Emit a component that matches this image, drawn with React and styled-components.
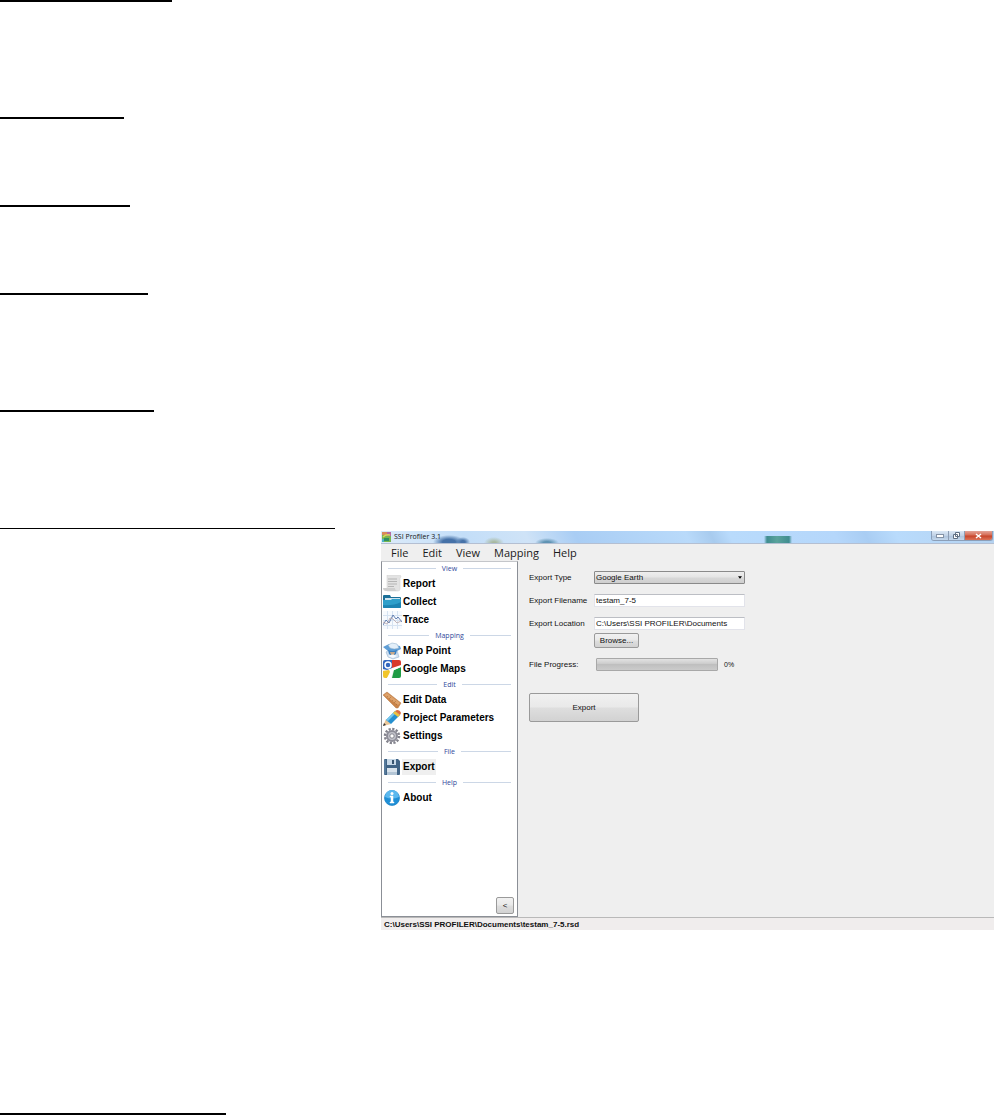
import styled, { createGlobalStyle } from "styled-components";

const GlobalStyle = createGlobalStyle`
  * {
    box-sizing: border-box;
  }

  body {
    margin: 0;
    background: #ffffff;
    color: #111111;
    font-family: "Liberation Sans", Arial, sans-serif;
    font-size: 8px;
  }
`

const Page = styled.main`
  display: flex;
  flex-direction: column;
`

const Rule = styled.hr`
  width: ${({ $width }) => $width}px;
  height: ${({ $thin }) => ($thin ? 1 : 2)}px;
  margin: 0 0 ${({ $space }) => $space || 0}px;
  border: none;
  background: #000000;
`

const Window = styled.section`
  display: flex;
  flex-direction: column;
  margin: 0 0 183px 381px;
  background: #efefef;
`

const TitleBar = styled.header`
  display: flex;
  align-items: center;
  gap: 3px;
  height: 13px;
  padding-left: 1px;
  border-bottom: 1px solid #b4bfd2;
  background:
    radial-gradient(ellipse 16px 7px at 68px 11px, #4672a8 40%, transparent),
    radial-gradient(ellipse 7px 5px at 82px 11px, #4672a8 30%, transparent),
    radial-gradient(ellipse 10px 6px at 113px 12px, #a9b9a0 20%, transparent),
    radial-gradient(ellipse 12px 5px at 166px 12px, #5f93b3 30%, transparent),
    linear-gradient(90deg, transparent, #3f8d90 3px, #5aa39c 13px, #3f8d90 25px, transparent) 383px 5px / 28px 8px no-repeat,
    linear-gradient(65deg, #dcebfa 0%, #c3def8 14%, #cfe3f7 24%, #a9cdf4 32%, #b9dafa 50%, #a8cbee 54%, #b9dbfc 57%, #b5d7fb 74%, #a9cdf3 79%, #b9dbfc 84%, #b4d2f0 100%);
`

const Title = styled.h1`
  flex: 1;
  margin: 0;
  font-family: "Open Sans", sans-serif;
  font-size: 7px;
  font-weight: 400;
  line-height: 12px;
`

const WindowButtons = styled.div`
  display: flex;
  align-self: flex-start;
  margin-right: 1px;
  border: 1px solid #8b9fb9;
  border-top: none;
  border-radius: 0 0 3px 3px;
  overflow: hidden;
`

const WindowButton = styled.button`
  display: flex;
  align-items: center;
  justify-content: center;
  width: ${({ $close }) => ($close ? 28 : 16)}px;
  height: 9px;
  padding: 0;
  border: none;
  border-left: ${({ $first }) => ($first ? "none" : "1px solid #8d9db3")};
  background: ${({ $close }) => ($close
    ? "linear-gradient(#e3a498, #d66d56 45%, #c7452b 55%, #dc7257)"
    : "linear-gradient(#dbe8f5, #c1d2e6 50%, #adc3dc 55%, #c5d8ec)")};
`

const MenuBar = styled.nav`
  display: flex;
  gap: 14px;
  height: 17px;
  padding-left: 10px;
`

const MenuLink = styled.a`
  color: #1a1a1a;
  font-family: "Open Sans", sans-serif;
  font-size: 11px;
  line-height: 18px;
  text-decoration: none;
`

const Body = styled.div`
  display: flex;
  min-height: 356px;
`

const Sidebar = styled.aside`
  display: flex;
  flex-direction: column;
  width: 137px;
  border: 1px solid #8b8f96;
  border-top-color: #c4c6ca;
  background: #ffffff;
`

const GroupTitle = styled.h2`
  display: flex;
  align-items: center;
  gap: 6px;
  margin: 0;
  padding: 0 6px;
  color: #31499a;
  font-family: "Open Sans", sans-serif;
  font-size: 7px;
  font-weight: 400;
  line-height: 13px;

  &:before,
  &:after {
    flex: 1;
    height: 1px;
    background: #ccd7e6;
    content: "";
  }
`

const SideItem = styled.button`
  display: flex;
  align-items: center;
  height: 18px;
  padding: 0 0 0 1px;
  border: none;
  background: none;
  color: #000000;
  font-family: inherit;
  font-size: 10px;
  font-weight: 700;
  line-height: 16px;

  svg {
    width: 19px;
    height: 18px;
    flex: none;
  }

  span {
    padding: 0 1px;
    background: ${({ $active }) => ($active ? "#efefef" : "none")};
  }
`

const grayButton = `
  border: 1px solid #9a9a9a;
  border-radius: 2px;
  background: linear-gradient(#f1f1f1, #e9e9e9 48%, #dedede 52%, #d2d2d2);
  color: #111111;
  font-family: inherit;
  font-size: 8px;
`

const CollapseButton = styled.button`
  ${grayButton}
  align-self: flex-end;
  width: 18px;
  height: 17px;
  margin: auto 3px 2px 0;
  padding: 0;
`

const Form = styled.form`
  display: flex;
  flex: 1;
  flex-direction: column;
  align-items: flex-start;
  gap: 10px;
  padding: 10px 11px;
`

const Row = styled.div`
  display: flex;
  align-items: flex-start;

  label {
    width: 65px;
    line-height: 13px;
  }
`

const FieldStack = styled.div`
  display: flex;
  flex-direction: column;
  align-items: flex-start;
  gap: 3px;
`

const TextInput = styled.input`
  width: 151px;
  height: 13px;
  padding: 0 1px;
  border: 1px solid #e2e3ea;
  border-top-color: #bcbec4;
  background: #ffffff;
  color: #111111;
  font-family: inherit;
  font-size: 8px;
`

const SelectWrap = styled.div`
  position: relative;
  width: 151px;

  svg {
    position: absolute;
    top: 5px;
    right: 3px;
    width: 4px;
    height: 3px;
    pointer-events: none;
  }
`

const Select = styled.select`
  display: block;
  width: 100%;
  height: 13px;
  padding: 0 1px;
  border: 1px solid #8a8a8a;
  border-radius: 1px;
  background: linear-gradient(#eeeeee, #e4e4e4 48%, #d8d8d8 52%, #cfcfcf);
  color: #111111;
  font-family: inherit;
  font-size: 8px;
  appearance: none;
`

const BrowseButton = styled.button`
  ${grayButton}
  width: 45px;
  height: 15px;
  padding: 0;
`

const Progress = styled.progress`
  width: 122px;
  height: 13px;
  margin: 0 6px 0 2px;
  border: 1px solid #a8a8a8;
  border-radius: 1px;
  background: #c9c9c9;
  appearance: none;

  &::-webkit-progress-bar {
    background: linear-gradient(#e2e2e2, #cecece 40%, #bfbfbf 50%, #cbcbcb);
  }
`

const Percent = styled.span`
  font-size: 7px;
  line-height: 14px;
`

const ExportButton = styled.button`
  ${grayButton}
  width: 110px;
  height: 29px;
  margin-top: 11px;
`

const StatusBar = styled.footer`
  height: 13px;
  padding-left: 3px;
  border-top: 1px solid #b9b9b9;
  background: #f0eded;
  font-weight: 700;
  line-height: 13px;
`

const AppIcon = () => <svg width="9" height="10" viewBox="0 0 9 10">
    <rect width="9" height="10" fill="#78b650" />
    <path d="M0 0h5v3H0z" fill="#d98a5c" />
    <path d="M5 0h4v4H5z" fill="#b56aa0" />
    <path d="M1 5q3-3 7-2" fill="none" stroke="#d8d65b" strokeWidth="1.500" />
    <path d="M2 9V6h5v3z" fill="#2e8f63" />
    <path d="M0 7h2v3H0z" fill="#4bb3c4" />
</svg>

const ReportIcon = () => <svg viewBox="0 0 19 18">
    <path d="M4 0h12q2 0 2 2l-1 1v11q0 2-2 2H4z" fill="#e3e3e3" stroke="#cfcfcf" strokeWidth=".5" />
    <path d="M0 13h12q0 3 3 3H3q-3 0-3-3z" fill="#cfcfcf" />
    <path d="M5 4h9M5 6.500h9M5 9h9M5 11.500h6" stroke="#b5b5b5" />
</svg>

const CollectIcon = () => <svg viewBox="0 0 19 18">
    <path d="M0 3q0-1 1-1h6l1 2h9q1 0 1 1v9H0z" fill="#1b6f98" />
    <path d="M2 5h15v3H2z" fill="#cfe5f0" />
    <path d="M0 7h8l1-1h9v8q0 1-1 1H1q-1 0-1-1z" fill="#2f9fca" />
    <path d="M0 12q10 1 18-3v5q0 1-1 1H1q-1 0-1-1z" fill="#1d84b2" />
</svg>

const TraceIcon = () => <svg viewBox="0 0 19 18">
    <rect width="19" height="18" fill="#f7fafe" />
    <path d="M0 4.500h19M0 9.500h19M0 14.500h19M4.500 0v18M9.500 0v18M14.500 0v18" stroke="#d6e3f2" />
    <path d="M0 14l3-5 3 3 4-8 3 4 2-2 4 5" fill="none" stroke="#5673a8" strokeWidth=".9" />
    <path d="M0 11l4 2 3-6 3 1 4 4 4-2" fill="none" stroke="#b7a5a8" strokeWidth=".8" />
</svg>

const MapPointIcon = () => <svg viewBox="0 0 19 18">
    <path d="M3 10l3-2h8l2 7-6 2-5-2z" fill="#cfdff0" stroke="#8fadca" strokeWidth=".5" />
    <path d="M0 5l6-3 11 2 1 3-4 2H5z" fill="#5f9ed6" />
    <path d="M5 3l4-2 5 1 2 4q-5 2-9 0z" fill="#e3eff9" stroke="#86abc9" strokeWidth=".5" />
    <path d="M5 8q4 2 9 0l-1 4q-4 3-7 0z" fill="#3a7fc0" />
    <path d="M7 10h5l-1 3H8z" fill="#c7a98c" />
    <path d="M5 14q5-3 9 0l-4 2z" fill="#f7fbff" />
</svg>

const GoogleMapsIcon = () => <svg viewBox="0 0 19 18">
    <rect width="18" height="18" rx="2" fill="#f3f3f3" />
    <path d="M9 0h7q2 0 2 2v4l-9 3z" fill="#d83a2d" />
    <path d="M11 10l7-3v9q0 2-2 2H9z" fill="#1f9b45" />
    <path d="M0 11l6-1 3 2-5 6H2q-2 0-2-2z" fill="#f1c52b" />
    <path d="M0 2q0-2 2-2h7v8l-5 2-4-1z" fill="#3467be" />
    <circle cx="5" cy="5" r="3" fill="none" stroke="#ffffff" strokeWidth="1.500" />
    <path d="M6 9l4 1-2 8H4l3-6z" fill="#ffffff" />
    <path d="M9 8l9-3v2l-9 4z" fill="#ffffff" />
</svg>

const EditDataIcon = () => <svg viewBox="0 0 19 18">
    <path d="M0 4l4-3 14 11-3 5h-2z" fill="#c98349" stroke="#b97a45" strokeWidth=".5" />
    <path d="M1 4l3-2 13 10-2 2z" fill="#dda16a" />
    <path d="M4 6l1-1M6 8l2-2M9 10l1-1M11 12l2-2M13 14l1-1" stroke="#9d6435" strokeWidth=".5" />
</svg>

const PencilIcon = () => <svg viewBox="0 0 19 18">
    <path d="M0 17l3-7 5 5z" fill="#eac79a" />
    <path d="M0 17l1-3 2 2z" fill="#353535" />
    <path d="M3 11l9-9 5 4-9 9z" fill="#2690cf" />
    <path d="M3 11l9-9 2 1-9 9z" fill="#76c7ee" />
    <path d="M10 4l2-2 5 4-2 2z" fill="#f0c33d" />
    <path d="M12 2l2-1q3 0 4 3l-1 2z" fill="#dd6c3e" />
</svg>

const GearIcon = () => <svg viewBox="0 0 19 18">
    <circle cx="9" cy="9" r="7" fill="none" stroke="#83838d" strokeWidth="2.500" strokeDasharray="2.200 1.465" />
    <circle cx="9" cy="9" r="5" fill="#c1c2ca" stroke="#8d8d98" strokeWidth="2" />
    <circle cx="9" cy="9" r="2.200" fill="#ffffff" stroke="#85858e" />
</svg>

const DiskIcon = () => <svg viewBox="0 0 19 18">
    <path d="M2 1h13l2 2v13q0 1-1 1H2q-1 0-1-1V2q0-1 1-1z" fill="#416486" />
    <path d="M4 1h9v6H4z" fill="#c8d9e8" />
    <path d="M9 2h2v4H9z" fill="#36536f" />
    <path d="M4 10h10v7H4z" fill="#d9e3ec" />
    <path d="M4 14h10v3H4z" fill="#b4c6d6" />
    <path d="M2 2v14" stroke="#6e90b0" />
</svg>

const InfoIcon = () => <svg viewBox="0 0 19 18">
    <circle cx="9" cy="9" r="7.500" fill="#1f8fd6" stroke="#1a7fc4" strokeWidth=".7" />
    <path d="M2 8a7 7 0 0 1 14 0q-7 3-14 0z" fill="#5bb8ee" />
    <circle cx="9" cy="4.500" r="1.500" fill="#ffffff" />
    <path d="M7 7h3v6h1v1H7v-1h1V8H7z" fill="#ffffff" stroke="#ffffff" strokeWidth=".5" />
</svg>

const groups = [
    { title: "View", items: [["Report", ReportIcon], ["Collect", CollectIcon], ["Trace", TraceIcon]] },
    { title: "Mapping", items: [["Map Point", MapPointIcon], ["Google Maps", GoogleMapsIcon]] },
    { title: "Edit", items: [["Edit Data", EditDataIcon], ["Project Parameters", PencilIcon], ["Settings", GearIcon]] },
    { title: "File", items: [["Export", DiskIcon]] },
    { title: "Help", items: [["About", InfoIcon]] },
]

const ProfilerWindow = () => {
    return <Window>
        <TitleBar>
            <AppIcon />
            <Title>SSI Profiler 3.1</Title>
            <WindowButtons>
                <WindowButton $first aria-label="Minimize">
                    <svg width="8" height="4"><rect x=".5" y=".5" width="7" height="3" fill="#ffffff" stroke="#8593a6" /></svg>
                </WindowButton>
                <WindowButton aria-label="Restore">
                    <svg width="7" height="7"><path d="M2.500.5h4v4h-4zM.5 2.500h4v4h-4z" fill="#ffffff" stroke="#5f6f83" /></svg>
                </WindowButton>
                <WindowButton $close aria-label="Close">
                    <svg width="7" height="6"><path d="M1 1l5 4M6 1L1 5" stroke="#ffffff" strokeWidth="1.500" /></svg>
                </WindowButton>
            </WindowButtons>
        </TitleBar>
        <MenuBar>
            {["File", "Edit", "View", "Mapping", "Help"].map((name) => <MenuLink key={name} href="#">{name}</MenuLink>)}
        </MenuBar>
        <Body>
            <Sidebar>
                {groups.map(({ title, items }) => <div key={title}>
                    <GroupTitle>{title}</GroupTitle>
                    {items.map(([name, Icon]) => <SideItem key={name} $active={name === "Export"}>
                        <Icon />
                        <span>{name}</span>
                    </SideItem>)}
                </div>)}
                <CollapseButton>&lt;</CollapseButton>
            </Sidebar>
            <Form onSubmit={(e) => e.preventDefault()}>
                <Row>
                    <label htmlFor="type">Export Type</label>
                    <SelectWrap>
                        <Select id="type">
                            <option>Google Earth</option>
                        </Select>
                        <svg viewBox="0 0 5 3"><path d="M0 0h5L2.500 3z" fill="#000000" /></svg>
                    </SelectWrap>
                </Row>
                <Row>
                    <label htmlFor="filename">Export Filename</label>
                    <TextInput id="filename" defaultValue="testam_7-5" />
                </Row>
                <Row>
                    <label htmlFor="location">Export Location</label>
                    <FieldStack>
                        <TextInput id="location" defaultValue="C:\Users\SSI PROFILER\Documents" />
                        <BrowseButton type="button">Browse...</BrowseButton>
                    </FieldStack>
                </Row>
                <Row>
                    <label htmlFor="progress">File Progress:</label>
                    <Progress id="progress" value="0" max="100" />
                    <Percent>0%</Percent>
                </Row>
                <ExportButton type="submit">Export</ExportButton>
            </Form>
        </Body>
        <StatusBar>C:\Users\SSI PROFILER\Documents\testam_7-5.rsd</StatusBar>
    </Window>
}

const App = () => {
    return <Page>
        <GlobalStyle />
        <Rule $width={172} $space={115} />
        <Rule $width={124} $space={86} />
        <Rule $width={130} $space={86} />
        <Rule $width={148} $space={115} />
        <Rule $width={154} $space={116} />
        <Rule $width={335} $space={2} $thin />
        <ProfilerWindow />
        <Rule $width={226} />
    </Page>
}

export default App
